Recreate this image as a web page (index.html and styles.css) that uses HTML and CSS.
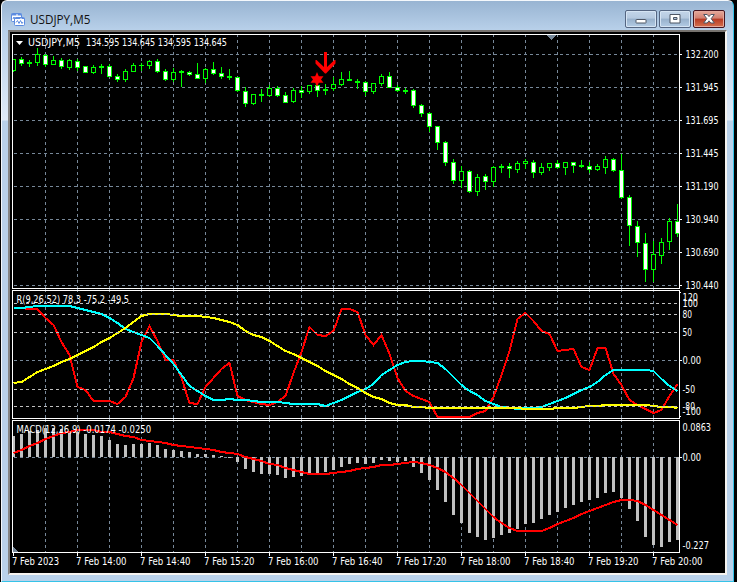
FILE: index.html
```html
<!DOCTYPE html>
<html lang="en">
<head>
    <meta charset="UTF-8">
    <meta name="viewport" content="width=device-width, initial-scale=1.0">
    <title>USDJPY,M5</title>
    <link rel="stylesheet" href="styles.css">
</head>
<body>

    <div class="window">
        <div class="title-bar">
            <svg class="title-icon" width="16" height="15" viewBox="0 0 16 15">
                <rect x="1.5" y="1.5" width="10" height="8" rx="1" fill="#fff" stroke="#5b8be0"/>
                <path d="M1.5 2.5h10" stroke="#5b8be0" stroke-width="2" stroke-dasharray="5 1"/>
                <path d="M3 7l1-2 1 2" fill="none" stroke="#5b8be0"/>
                <rect x="4.5" y="5.5" width="10" height="8" rx="1" fill="#fff" stroke="#5b8be0"/>
                <path d="M4.5 6.5h10" stroke="#5b8be0" stroke-width="1" stroke-dasharray="6 1"/>
                <path d="M6 10.5l1.5-2 1.5 3 1.5-3 1.5 3 1-1.5" fill="none" stroke="#5b8be0"/>
            </svg>
            <span class="title">USDJPY,M5</span>
            <div class="buttons">
                <button class="win-btn" aria-label="Minimize">
                    <svg width="12" height="12" viewBox="0 0 12 12"><rect x="1" y="6.5" width="10" height="3.5" rx="0.5" fill="#fff" stroke="#4d5665"/></svg>
                </button>
                <button class="win-btn" aria-label="Restore">
                    <svg width="12" height="12" viewBox="0 0 12 12"><path fill-rule="evenodd" d="M1 1.500h10v8.500h-10zM4.500 4.500h3.500v2h-3.500z" fill="#fff" stroke="#4d5665"/></svg>
                </button>
                <button class="win-btn close" aria-label="Close">
                    <svg width="12" height="12" viewBox="0 0 12 12"><path d="M0.700 1.500h3.500L6 3.600l1.800-2.100h3.500L8.200 5.700l3.100 4.300H7.800L6 7.800 4.200 10H0.700l3.100-4.300z" fill="#fff" stroke="#4d5665"/></svg>
                </button>
            </div>
        </div>

        <div class="chart">
            <svg id="price" width="715" height="257" viewBox="10 32 715 257"></svg>
            <svg id="range" width="715" height="130" viewBox="10 289 715 130"></svg>
            <svg id="macd" width="715" height="134" viewBox="10 419 715 134"></svg>
            <svg id="time" width="715" height="20" viewBox="10 553 715 20"></svg>
        </div>
    </div>

    <script src="chart.js"></script>
</body>
</html>
```

FILE: styles.css
```css
body {
    margin: 0;
    width: 737px;
    height: 582px;
    overflow: hidden;
    background-color: #000;
}

.window {
    box-sizing: border-box;
    width: 733px;
    height: 582px;
    margin-left: 1px;
    padding: 0 6px;
    border-left: 1px solid #f4f8fc;
    border-right: 1px solid #35c3e8;
    border-top: 1px solid #f4f8fc;
    border-bottom: 1px solid #35c3e8;
    border-radius: 6px 6px 0 0;
    background: linear-gradient(#98b4d2 0, #b9d1ea 30px, #dfeaf7 119px, #b9d1ea 120px);
}

.title-bar {
    display: flex;
    align-items: center;
    width: 717px;
    height: 29px;
}

.title-icon {
    margin: 7px 4px 0 2px;
}

.title {
    flex: 1;
    padding-top: 6px;
    font-family: "Open Sans", sans-serif;
    font-size: 11.7px;
    line-height: 18px;
    color: #111;
}

.buttons {
    display: flex;
    gap: 2px;
    margin-top: 6px;
}

.win-btn {
    box-sizing: border-box;
    display: flex;
    align-items: center;
    justify-content: center;
    width: 32px;
    height: 18px;
    padding: 0;
    border: 1px solid #546581;
    border-radius: 2px;
    background: linear-gradient(#c3d5e9 0, #b5c9df 45%, #97b0cb 50%, #b4cce5 100%);
    box-shadow: inset 0 0 0 1px #d5e4f3;
}

.close {
    border-color: #451520;
    background: linear-gradient(#e4a99b 0, #d27f70 45%, #b73a24 50%, #d5714f 100%);
    box-shadow: inset 0 0 0 1px #e5a99d;
}

.chart {
    display: flex;
    flex-direction: column;
    width: 715px;
    height: 541px;
    border-top: 2px solid #77736f;
    border-left: 2px solid #858585;
    border-right: 2px solid #f5f3f0;
    border-bottom: 2px solid #f5f3f0;
    background-color: #000;
}

.chart svg {
    display: block;
    flex: none;
    overflow: visible;
    font-family: "DejaVu Sans Condensed", "DejaVu Sans", sans-serif;
    font-stretch: condensed;
    font-size: 9.7px;
}

.chart line,
.chart rect,
.chart polyline,
.chart .marker {
    shape-rendering: crispEdges;
}

.grid {
    stroke: #778899;
    stroke-dasharray: 3 3;
}

.level {
    stroke: #c0c0c0;
    stroke-dasharray: 3 3;
}

.frame {
    stroke: #fff;
}

.label {
    fill: #fff;
}

.wick {
    fill: #00ff00;
}

.up {
    fill: #000;
}

.down {
    fill: #fff;
}

.bar {
    fill: #c0c0c0;
}

.marker {
    fill: #778899;
}

.signal {
    fill: #ff0000;
}

.red,
.aqua,
.yellow {
    fill: none;
    stroke-width: 2;
}

.red {
    stroke: #ff0000;
}

.aqua {
    stroke: #00ffff;
}

.yellow {
    stroke: #ffff00;
}
```

FILE: chart.js
```js
const NS = 'http://www.w3.org/2000/svg';
const LEFT = 12, RIGHT = 679, STEP = 8, FIRST = 13;

// high, body top, body bottom, low, 1 = bearish
const candles = [
    [59,59,70,71,0],[57,59,63,65,1],[60,62,63,66,0],[48,54,62,65,0],[54,55,64,66,1],[56,60,64,64,0],
    [58,60,66,68,1],[59,60,67,69,0],[59,61,67,70,1],[66,66,72,72,1],[65,67,72,73,0],[64,66,67,73,0],
    [64,66,76,76,1],[74,76,79,81,1],[69,71,79,81,0],[63,65,71,71,0],[63,65,65,70,0],[60,61,65,68,0],
    [59,61,71,72,1],[69,71,79,80,1],[68,72,79,81,0],[70,71,72,86,0],[71,72,74,75,1],[63,74,78,78,1],
    [68,69,78,82,0],[62,69,73,74,1],[67,73,76,78,1],[69,76,77,79,0],[77,77,90,91,1],[87,91,103,106,1],
    [94,94,103,104,0],[89,94,95,101,0],[85,88,95,96,0],[86,88,95,96,1],[92,95,102,102,1],[88,90,101,102,0],
    [86,90,92,97,1],[85,85,91,93,0],[80,85,90,96,1],[84,89,90,94,0],[77,84,88,90,0],[72,79,84,85,0],
    [71,79,80,80,0],[79,81,82,88,0],[81,82,91,95,1],[83,83,91,93,0],[74,76,83,85,0],[72,76,87,87,1],
    [85,87,90,91,1],[88,90,91,93,0],[89,90,105,107,1],[104,105,113,116,1],[112,113,126,131,1],[126,126,142,149,1],
    [141,142,162,165,1],[159,162,180,183,1],[166,171,180,187,0],[170,171,191,192,1],[174,177,191,195,0],[174,176,181,189,1],
    [166,167,181,186,0],[164,166,167,172,0],[163,166,168,177,1],[161,163,169,172,0],[159,161,163,168,0],[160,162,172,177,1],
    [163,167,172,174,0],[163,163,167,170,0],[160,163,167,168,1],[162,162,167,174,0],[162,162,165,172,1],[160,165,166,167,0],
    [162,166,169,172,1],[164,166,169,170,0],[156,159,167,173,0],[158,159,170,171,1],[154,170,197,198,1],[195,197,225,245,1],
    [221,226,242,256,1],[233,243,269,281,1],[241,254,269,281,0],[238,242,255,263,0],[218,221,241,249,0],[204,221,233,236,1]
];

// one value per candle
const fast = [308,308,309,309,318,325,342,355,387,390,401,401,401,404,397,378,342,326,341,360,360,378,403,404,387,378,369,363,396,400,
    402,404,405,402,396,373,352,327,335,336,331,309,309,312,335,345,335,354,378,391,396,399,402,417,417,417,417,417,413,411,
    397,375,351,319,313,321,331,334,351,350,349,367,370,348,348,374,385,400,405,409,413,410,396,384];
const mid = [308,308,307,306,306,306,306,306,308,310,312,314,318,323,329,332,335,338,346,355,364,375,386,391,396,400,400,399,400,400,
    401,402,402,402,403,404,404,404,404,406,403,400,396,392,389,384,375,370,365,362,361,361,362,363,369,377,385,391,395,401,
    404,407,408,409,408,408,407,404,401,398,394,390,387,382,375,370,370,370,370,370,371,379,386,391];
const slow = [383,382,377,372,369,366,362,359,355,351,347,342,338,333,328,322,316,314,314,314,315,316,316,316,317,318,320,322,325,331,
    335,337,341,346,351,354,358,362,366,371,375,379,384,388,393,397,399,403,405,405,407,407,408,408,408,408,408,408,408,408,
    408,408,408,408,409,409,409,409,408,408,408,407,406,406,405,405,405,405,405,405,406,407,407,408];
const macd = [436,434,431,430,428,428,429,431,432,434,435,436,440,444,445,444,444,443,445,449,450,451,452,454,454,455,456,457,462,469,
    472,474,474,475,478,477,476,474,473,472,470,467,464,463,464,463,460,461,462,461,467,473,480,490,502,515,523,533,537,540,
    538,535,533,529,524,523,519,515,512,508,505,502,500,498,493,492,498,509,521,537,545,547,542,540];
const signal = [453,450,446,443,439,436,433,432,430,430,430,432,432,434,436,437,440,441,442,443,445,446,447,448,449,450,452,453,454,457,
    459,461,464,465,468,470,472,474,474,474,473,472,471,469,468,467,465,465,464,463,462,463,465,468,472,478,485,493,501,509,
    517,523,528,531,531,531,531,528,524,521,518,514,511,508,505,502,500,500,501,505,510,515,520,525];

function add(svg, tag, attrs, text) {
    const el = document.createElementNS(NS, tag);
    for (const key in attrs) el.setAttribute(key, attrs[key]);
    if (text) el.textContent = text;
    svg.appendChild(el);
    return el;
}

function hline(svg, y, cls) {
    add(svg, 'line', { x1: cls == 'frame' ? LEFT : 14, x2: cls == 'frame' ? RIGHT + 1 : RIGHT, y1: y + 0.5, y2: y + 0.5, class: cls });
}

function vgrid(svg, from, to) {
    for (let x = 45; x < RIGHT; x += 32) {
        add(svg, 'line', { x1: x + 0.5, x2: x + 0.5, y1: from, y2: to, class: 'grid' });
    }
}

function frame(svg, top, bottom) {
    hline(svg, top, 'frame');
    hline(svg, bottom, 'frame');
    for (const x of [LEFT, RIGHT]) {
        add(svg, 'line', { x1: x + 0.5, x2: x + 0.5, y1: top, y2: bottom + 1, class: 'frame' });
    }
}

function tick(svg, y) {
    add(svg, 'line', { x1: RIGHT, x2: RIGHT + 3, y1: y + 0.5, y2: y + 0.5, class: 'frame' });
}

function label(svg, x, y, text, width) {
    add(svg, 'text', { x: x, y: y, textLength: width, lengthAdjust: 'spacingAndGlyphs', class: 'label' }, text);
}

function curve(svg, values, cls) {
    const points = values.map((y, i) => (FIRST + i * STEP + 0.5) + ',' + y).join(' ');
    add(svg, 'polyline', { points: points, class: cls });
}

function drawPrice() {
    const svg = document.getElementById('price');
    const prices = ['132.200', '131.945', '131.695', '131.445', '131.190', '130.940', '130.690', '130.440'];
    vgrid(svg, 34, 289);
    prices.forEach((p, i) => {
        const y = 54 + i * 33;
        hline(svg, y, 'grid');
        tick(svg, y);
        label(svg, 685.5, y + 4, p, 33);
    });
    candles.forEach(([high, top, bottom, low, down], i) => {
        const x = FIRST + i * STEP;
        const left = Math.max(x - 2, 13);
        const right = Math.min(x + 3, RIGHT);
        add(svg, 'rect', { x: x, y: high, width: 1, height: low - high + 1, class: 'wick' });
        add(svg, 'rect', { x: left, y: top, width: right - left, height: bottom - top + 1, class: 'wick' });
        if (bottom - top > 1) {
            const x1 = Math.max(x - 1, 13);
            add(svg, 'rect', { x: x1, y: top + 1, width: Math.min(x + 2, RIGHT) - x1, height: bottom - top - 1, class: down ? 'down' : 'up' });
        }
    });
    add(svg, 'path', { d: 'M324 52h3v15l7.500-7h1v3.500l-9.500 10h-1l-9.500-10v-3.500h1l7.500 7z', class: 'signal' });
    add(svg, 'path', { d: 'M317 72l1.800 4.300h4.700l-2.500 3.200 2.500 3.200h-4.700l-1.800 4.300-1.800-4.300h-4.700l2.500-3.200-2.500-3.200h4.700z', class: 'signal' });
    add(svg, 'path', { d: 'M547 35h9l-4.500 5z', class: 'marker' });
    frame(svg, 34, 288);
    add(svg, 'path', { d: 'M16 41h7l-3.500 4z', class: 'label' });
    label(svg, 28, 46, 'USDJPY,M5', 52);
    label(svg, 86, 46, '134.595 134.645 134.595 134.645', 141);
}

function drawRange() {
    const svg = document.getElementById('range');
    vgrid(svg, 289, 419);
    hline(svg, 360, 'grid');
    curve(svg, fast, 'red');
    curve(svg, mid, 'aqua');
    curve(svg, slow, 'yellow');
    [303, 314, 332, 389, 406].forEach(y => hline(svg, y, 'level'));
    frame(svg, 290, 418);
    add(svg, 'rect', { x: 680, y: 292, width: 1, height: 1, class: 'down' });
    add(svg, 'rect', { x: 680, y: 416, width: 1, height: 1, class: 'down' });
    tick(svg, 360);
    label(svg, 682.5, 301, '120', 15.5);
    label(svg, 682.5, 307, '100', 15.5);
    label(svg, 682.5, 318, '80', 9.5);
    label(svg, 682.5, 336, '50', 9.5);
    label(svg, 682.5, 364, '0.00', 18.5);
    label(svg, 682.5, 393, '-50', 12.5);
    label(svg, 682.5, 410, '-80', 12.5);
    label(svg, 682.5, 415, '-100', 18.5);
    label(svg, 16.5, 303, 'R(9,26,52) 78.3 -75.2 -49.5', 112.5);
}

function drawMacd() {
    const svg = document.getElementById('macd');
    vgrid(svg, 419, 552);
    hline(svg, 457, 'grid');
    macd.forEach((y, i) => {
        const x = Math.max(FIRST + i * STEP - 1, 13);
        const right = Math.min(FIRST + i * STEP + 2, RIGHT);
        add(svg, 'rect', { x: x, y: Math.min(y, 457), width: right - x, height: Math.max(Math.abs(457 - y), 1), class: 'bar' });
    });
    curve(svg, signal, 'red');
    add(svg, 'path', { d: 'M13 547l5 5h-5z', class: 'marker' });
    frame(svg, 420, 552);
    tick(svg, 457);
    label(svg, 682.5, 431, '0.0863', 28.5);
    label(svg, 682.5, 461, '0.00', 18.5);
    label(svg, 682.5, 549, '-0.227', 26.5);
    label(svg, 16.5, 433, 'MACD(12,26,9) -0.0174 -0.0250', 134.5);
}

function drawTime() {
    const svg = document.getElementById('time');
    const times = ['2023', '14:00', '14:40', '15:20', '16:00', '16:40', '17:20', '18:00', '18:40', '19:20', '20:00'];
    times.forEach((t, i) => {
        const x = FIRST + i * 64;
        add(svg, 'line', { x1: x + 0.5, x2: x + 0.5, y1: 553, y2: 556, class: 'frame' });
        label(svg, x - 1, 565, '7 Feb ' + t, i ? 50.5 : 47);
    });
}

drawPrice();
drawRange();
drawMacd();
drawTime();
```
